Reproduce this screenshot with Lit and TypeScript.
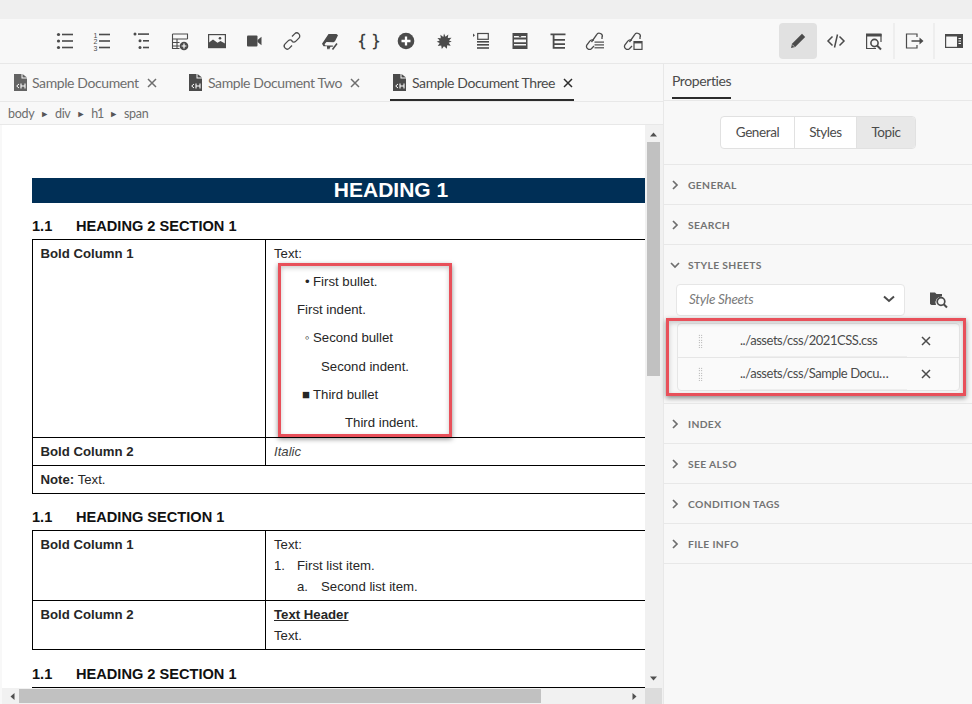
import { LitElement, html, css, svg } from "lit";
import { customElement } from "lit/decorators.js";

const i = (body: unknown, w = 20, h = 20) =>
  html`<svg width=${w} height=${h} viewBox="0 0 ${w} ${h}" fill="#4b4b4b">${body}</svg>`;

const lines = (x: number, x2: number, ys: number[], h = 1.6) =>
  ys.map((y) => svg`<rect x=${x} y=${y} width=${x2 - x} height=${h}></rect>`);

const link = svg`<g fill="none" stroke="#4b4b4b" stroke-width="1.3"><path d="M10 5.5l2.6-2.6a3 3 0 0 1 4.3 4.2l-3 3a3 3 0 0 1-4.2 0"/><path d="M10 14.5l-2.6 2.6a3 3 0 0 1-4.3-4.2l3-3a3 3 0 0 1 4.2 0"/></g>`;
const shortLink = svg`<g fill="none" stroke="#4b4b4b" stroke-width="1.3"><path d="M6.500 11l5-7a3 3 0 0 1 5.500 2.500V8"/><path d="M9 15l-2.600 2.700a3 3 0 0 1-4.600-3.600l3-4a3 3 0 0 1 4-.6"/></g>`;

const toolIcons = [
  i(svg`<circle cx="3.5" cy="3.5" r="1.6"></circle><circle cx="3.5" cy="10" r="1.6"></circle><circle cx="3.5" cy="16.5" r="1.6"></circle>${lines(7, 18, [2.7, 9.2, 15.7])}`),
  i(svg`<text x="0.5" y="6.5" font-size="7" font-family="Liberation Sans">1</text><text x="0.5" y="13" font-size="7" font-family="Liberation Sans">2</text><text x="0.5" y="19.5" font-size="7" font-family="Liberation Sans">3</text>${lines(6, 17, [2.7, 9.2, 15.7])}`),
  i(svg`<circle cx="4" cy="3" r="1.5"></circle><circle cx="9" cy="9.7" r="1.5"></circle><circle cx="9" cy="16.5" r="1.5"></circle>${lines(7, 18, [2.3])}${lines(12, 18, [9, 15.7])}`),
  i(svg`<path d="M3.5 3h15v5M3.5 3v14.5h7M3.5 8h15M3.5 11.5h7M3.5 15h7M8 8v9.5" stroke-width="1.1" fill="none" stroke="#4b4b4b"></path><circle cx="15" cy="15" r="4.3"></circle><path d="M15 12.6v4.8M12.6 15h4.8" stroke="#fff" stroke-width="1.2"></path>`),
  i(svg`<rect x="1.6" y="3.6" width="16.8" height="13" fill="none" stroke="#4b4b4b" stroke-width="1.2"></rect><path d="M2 15v-3.5l4-3 4.500 3.200 3-1.700 4.500 2.500V16.500H2z"></path><circle cx="13" cy="7.200" r="1.300"></circle>`),
  i(svg`<rect x="3" y="4.500" width="10.500" height="11" rx="1"></rect><path d="M13.500 9l4-3.200v8.400l-4-3.200z"></path>`),
  i(link),
  i(svg`<path d="M8.500 3h8l1.500 1.300-3 6-1.500 1-7-.3-2 2.200 1 1.300h7l1 .5-1 .7h-2l-1.500 3-1-1.500-1 1.500v-3.500H3.500l-1.500-2.500z"></path><path d="M12.500 18.500l4.500-6" fill="none" stroke="#4b4b4b" stroke-width="1.500"></path>`),
  html`<span class="braces">{ }</span>`,
  i(svg`<circle cx="10" cy="10" r="8.300"></circle><path d="M10 5.500v9M5.500 10h9" stroke="#fff" stroke-width="2.300"></path>`),
  i(svg`<path d="M10 2.500l1.500 3.300 2.800-2.200-.5 3.500 3.700-.3-2.500 2.700 2.700 1-3 1.300 2 3-3.500-.6-.3 3.500-2.900-2.400-2.200 2.600-.6-3.500-3.400.7 1.900-3-3-1.400 3-1.100-2.300-2.700 3.400.4-.4-3.600 2.900 2.200z"></path>`),
  i(svg`<path d="M1 2.500l2 1.800-2 1.800z"></path><rect x="5.700" y="2.500" width="10.600" height="5.800" fill="none" stroke="#4b4b4b" stroke-width="1.200"></rect>${lines(5, 17, [10, 13, 16.200])}`),
  i(svg`<path d="M2.500 2h15v16h-15z"></path><path d="M4 5h4.500l1.500 1.500L11.500 5H16v1.500H4zM4 8.500h12v2.800H4zM4 13h12v1.500H4z" fill="#f8f8f8"></path>`),
  i(svg`<path d="M2.500 2.500h15v1.800h-11V8H17v1.700H6.500v2.500H17v1.700H6.500V16H17v1.700H4.700V4.300H2.500z"></path>`),
  i(svg`${shortLink}${lines(9.500, 19, [10.500, 13.300, 16.200], 1.200)}`),
  i(svg`${shortLink}<rect x="11" y="10.600" width="8" height="7.800" fill="#f8f8f8" stroke="#4b4b4b" stroke-width="1.200"></rect><path d="M11 10.600h8v1.800h-8z"></path>`),
];

const pencil = i(svg`<path d="M14 2.800l3.200 3.200L7.200 16 3 17l1-4.200z"></path><path d="M4.200 13.600l2.200 2.200" stroke="#e1e1e1" stroke-width=".8"></path>`);
const code = i(svg`<path d="M6.500 5.500L2 10l4.500 4.500M13.500 5.500L18 10l-4.500 4.500M11.500 3.500l-3 13" fill="none" stroke="#4b4b4b" stroke-width="1.500"></path>`);
const preview = i(svg`<path d="M2 2.500h15.500v3H2z"></path><path d="M2.600 3v14.500H12M17 3v8" fill="none" stroke="#4b4b4b" stroke-width="1.200"></path><circle cx="10.500" cy="12" r="3.600" fill="none" stroke="#4b4b4b" stroke-width="1.600"></circle><path d="M13 14.500l4 4" stroke="#4b4b4b" stroke-width="2"></path>`);
const exportIcon = i(svg`<path d="M13 6V3H2.500v14H13v-3" fill="none" stroke="#4b4b4b" stroke-width="1.200"></path><path d="M7.500 9.300h8V6.500l4 3.500-4 3.500v-2.700h-8z"></path>`);
const panelIcon = i(svg`<rect x="1.600" y="3.600" width="16.800" height="12.800" fill="none" stroke="#4b4b4b" stroke-width="1.200"></rect><path d="M1.600 3h17v2.500h-17zM13 4h5.500v13H13z"></path><path d="M14.500 7.500h2.500M14.500 10h2.500M14.500 12.500h2.500" stroke="#f8f8f8" stroke-width="1"></path>`);

const fileIcon = html`<svg class="file" width="13" height="17" viewBox="0 0 13 17"><path d="M0 0h7.500v4.500H13V17H0z" fill="#4b4b4b"></path><path d="M8.500 0L13 3.500H8.500z" fill="#4b4b4b"></path><path d="M5 10l-2.300 2L5 14" fill="none" stroke="#fff" stroke-width="1"></path><path d="M7 9.500V14.500M11 9.500V14.500M7 12h4" fill="none" stroke="#fff" stroke-width="1.100"></path></svg>`;

const closeIcon = html`<svg class="x" width="10" height="10" viewBox="0 0 10 10"><path d="M1 1l8 8M9 1l-8 8" stroke="currentColor" stroke-width="1.500" fill="none"></path></svg>`;
const chevR = html`<svg width="8" height="10" viewBox="0 0 8 10"><path d="M2 1l4 4-4 4" fill="none" stroke="#6e6e6e" stroke-width="1.700"></path></svg>`;
const chevD = html`<svg width="10" height="8" viewBox="0 0 10 8"><path d="M1 2l4 4 4-4" fill="none" stroke="#6e6e6e" stroke-width="1.700"></path></svg>`;
const chevSel = html`<svg width="12" height="8" viewBox="0 0 12 8"><path d="M1 1.500l5 4.500 5-4.500" fill="none" stroke="#4b4b4b" stroke-width="2"></path></svg>`;
const folder = html`<svg width="20" height="18" viewBox="0 0 20 18"><path d="M1 3V1.500h5L7.500 3H13v2.500a6 6 0 0 0-6 8.500H2.500L1 13z" fill="#4b4b4b"></path><circle cx="12" cy="10.500" r="3.800" fill="none" stroke="#4b4b4b" stroke-width="1.700"></circle><path d="M14.700 13.200l3.300 3.300" stroke="#4b4b4b" stroke-width="2"></path></svg>`;

const tri = (d: string) => html`<svg width="7" height="7" viewBox="0 0 7 7"><path d=${d} fill="#505050"></path></svg>`;

@customElement("app-root")
export class AppRoot extends LitElement {
  static styles = css`
    :host { display: block; position: relative; width: 972px; height: 704px; overflow: hidden; background: #f8f8f8; font-family: "Lato", sans-serif; color: #4b4b4b; }
    .strip { height: 19px; background: #efefef; }
    .toolbar { height: 44px; display: flex; align-items: center; padding-left: 46px; border-bottom: 1px solid #e8e8e8; box-sizing: content-box; background: #f8f8f8; }
    .tool { width: 37.9px; height: 36px; display: flex; align-items: center; justify-content: center; flex: none; }
    .braces { font: 15px "DejaVu Sans Mono", monospace; color: #333; letter-spacing: -2px; -webkit-text-stroke: .3px #333; }
    .right { margin-left: auto; display: flex; align-items: center; }
    .mode { width: 38px; height: 36px; display: flex; align-items: center; justify-content: center; border-radius: 4px; }
    .mode.on { background: #e1e1e1; }
    .mode.last { width: 37px; }
    .sep { width: 2px; height: 36px; background: #eeeeee; }
    .main { display: flex; height: 640px; }
    .left { width: 664px; flex: none; display: flex; flex-direction: column; border-right: 1px solid #e8e8e8; box-sizing: border-box; }
    .tabs { height: 37px; display: flex; border-bottom: 1px solid #e8e8e8; padding-left: 14px; flex: none; box-sizing: content-box; }
    .tab { display: flex; align-items: center; font-size: 14px; letter-spacing: -.4px; color: #6e6e6e; height: 37px; box-sizing: border-box; }
    .tab .file { margin-right: 5px; }
    .tab .x { margin-left: 8px; color: #6e6e6e; }
    .tab.t1 { width: 175px; }
    .tab.t1 .file { opacity: .85; }
    .tab.t2 { width: 201px; }
    .tab.t2 .file { margin-right: 6px; }
    .tab.t3 { color: #4b4b4b; border-bottom: 2px solid #2c2c2c; padding: 2px 1px 0 3px; }
    .tab.t3 .file { margin-right: 6px; }
    .tab.t3 .x { color: #2c2c2c; }
    .crumb { height: 22px; flex: none; border-bottom: 1px solid #e8e8e8; display: flex; align-items: center; gap: 6px; padding-left: 8px; font-size: 12.500px; letter-spacing: -.3px; color: #6e6e6e; }
    .crumb i { font-style: normal; font-size: 9px; color: #555; }
    .crumb .h { letter-spacing: -1px; }
    .docwrap { flex: 1; min-height: 0; display: grid; grid-template-columns: 643px 17px; grid-template-rows: 1fr 16px; margin-left: 2px; background: #f1f1f1; }
    .doc { background: #fff; overflow: hidden; padding: 53px 0 0 30px; font-family: "Liberation Sans", Arial, sans-serif; font-size: 13.200px; color: #262626; min-height: 0; }
    .doc > * { width: 718px; }
    h1 { margin: 0; height: 25px; line-height: 24px; background: #002f56; color: #fff; text-align: center; font-size: 21px; font-weight: bold; }
    h2 { margin: 0; height: 37px; display: flex; align-items: flex-end; padding-bottom: 4px; box-sizing: border-box; font-size: 14.600px; font-weight: bold; color: #111; line-height: 18px; }
    h2.tight { height: 36px; }
    h2 b { width: 44px; }
    table { border-collapse: collapse; table-layout: fixed; }
    td { border: 1px solid #000; padding: 3px 8px; vertical-align: top; line-height: 21px; }
    td.c1 { width: 216.500px; padding-left: 7.500px; font-weight: bold; }
    td.tall { padding-bottom: 0; }
    .li { height: 28.200px; line-height: 28.200px; position: relative; white-space: pre; }
    .list { margin-top: 4px; }
    .m { position: absolute; }
    .flat { height: 21px; line-height: 21px; white-space: nowrap; }
    .num { float: left; width: 23px; }
    .num.sub { width: 24px; margin-left: 23px; }
    em { color: #444; }
    .hd { font-weight: bold; text-decoration: underline; }
    .vs { display: flex; flex-direction: column; align-items: center; justify-content: space-between; padding: 6px 0 6px; background: #f1f1f1; position: relative; }
    .vs .thumb { position: absolute; left: 2px; right: 2px; top: 17px; height: 234px; background: #c1c1c1; }
    .hs { display: flex; align-items: center; justify-content: space-between; padding: 0 7px; background: #f1f1f1; position: relative; }
    .hs .thumb { position: absolute; left: 17px; width: 522px; top: 1px; bottom: 1px; background: #c1c1c1; }
    .corner { background: #dcdcdc; }
    .panel { flex: 1; display: flex; flex-direction: column; min-width: 0; }
    .ptabs { height: 36px; border-bottom: 1px solid #e8e8e8; flex: none; padding-left: 8px; display: flex; box-sizing: content-box; }
    .ptab { border-bottom: 2px solid #2c2c2c; font-size: 14px; letter-spacing: -.4px; color: #4b4b4b; box-sizing: content-box; line-height: 34px; height: 33px; }
    .seg-row { height: 64px; flex: none; display: flex; justify-content: center; padding-top: 15px; box-sizing: border-box; border-bottom: 1px solid #e8e8e8; }
    .seg { display: flex; height: 33px; box-sizing: border-box; border: 1px solid #e1e1e1; border-radius: 4px; background: #fff; overflow: hidden; }
    .seg span { display: flex; align-items: center; justify-content: center; box-sizing: content-box; padding-bottom: 1px; font-size: 13.500px; letter-spacing: -.4px; color: #4b4b4b; border-left: 1px solid #e1e1e1; }
    .seg span:first-child { border-left: 0; width: 73px; }
    .seg span:nth-child(2) { width: 61px; }
    .seg span:nth-child(3) { width: 58px; background: #e8e8e8; }
    .sec { height: 40px; flex: none; box-sizing: border-box; border-bottom: 1px solid #e8e8e8; display: flex; align-items: center; padding-left: 7px; gap: 9px; font-size: 10.300px; font-weight: 700; letter-spacing: .35px; color: #737373; }
    .sec svg { width: 8px; }
    .open { height: 159px; flex: none; box-sizing: border-box; border-bottom: 1px solid #e8e8e8; display: flex; flex-direction: column; }
    .open .sec { border-bottom: 0; flex: none; gap: 8px; }
    .open .sec svg { width: 10px; margin-left: -1px; }
    .picker { display: flex; align-items: center; margin: -1px 0 0 12px; gap: 24px; }
    .select { width: 229px; height: 32px; box-sizing: border-box; background: #fff; border: 1px solid #e6e6e6; border-radius: 4px; display: flex; align-items: center; justify-content: space-between; padding: 0 9px 2px 12px; font-style: italic; font-size: 13.500px; letter-spacing: -.25px; color: #7a7a7a; }
    .rows { margin: 7px 0 0 13px; width: 283px; border: 1px solid #e6e6e6; border-radius: 4px; background: #fafafa; box-sizing: border-box; }
    .row { height: 33px; display: flex; align-items: center; font-size: 13px; letter-spacing: -.45px; color: #4b4b4b; box-sizing: border-box; }
    .row + .row { border-top: 1px solid #e6e6e6; }
    .grip { width: 5px; height: 14px; margin: 0 37px 0 20px; background-image: radial-gradient(#888 0.6px, transparent 0.7px); background-size: 2.500px 2.500px; flex: none; }
    .path { width: 167px; white-space: nowrap; flex: none; border-bottom: 1px solid #eeeeee; height: 32px; line-height: 31px; box-sizing: border-box; margin-right: 14px; }
    .row .x { color: #4b4b4b; }
    .mark { position: absolute; box-sizing: border-box; border: 3px solid #e8505a; box-shadow: 0 2px 5px rgba(0,0,0,.45), inset 0 2px 5px rgba(0,0,0,.2); pointer-events: none; }
    .mark.a { left: 278px; top: 263px; width: 174px; height: 174px; }
    .mark.b { left: 666px; top: 318px; width: 300px; height: 78px; }
  `;

  private section(n: string) {
    return html`<div class="sec">${chevR}<span>${n}</span></div>`;
  }

  render() {
    return html`
      <div class="strip"></div>
      <div class="toolbar">
        ${toolIcons.map((t) => html`<div class="tool">${t}</div>`)}
        <div class="right">
          <div class="mode on">${pencil}</div>
          <div class="mode">${code}</div>
          <div class="mode">${preview}</div>
          <div class="sep"></div>
          <div class="mode">${exportIcon}</div>
          <div class="sep"></div>
          <div class="mode last">${panelIcon}</div>
        </div>
      </div>
      <div class="main">
        <div class="left">
          <div class="tabs">
            <div class="tab t1">${fileIcon}<span>Sample Document</span>${closeIcon}</div>
            <div class="tab t2">${fileIcon}<span>Sample Document Two</span>${closeIcon}</div>
            <div class="tab t3">${fileIcon}<span>Sample Document Three</span>${closeIcon}</div>
          </div>
          <div class="crumb"><span>body</span><i>►</i><span>div</span><i>►</i><span class="h">h1</span><i>►</i><span>span</span></div>
          <div class="docwrap">
            <div class="doc">
              <h1>HEADING 1</h1>
              <h2 class="tight"><b>1.1</b>HEADING 2 SECTION 1</h2>
              <table>
                <tr>
                  <td class="c1">Bold Column 1</td>
                  <td class="tall">Text:
                    <div class="list">
                      <div class="li"><span class="m" style="left:31px">•</span><span style="margin-left:39px">First bullet.</span></div>
                      <div class="li"><span style="margin-left:23px">First indent.</span></div>
                      <div class="li"><span class="m" style="left:31px">◦</span><span style="margin-left:39px">Second bullet</span></div>
                      <div class="li"><span style="margin-left:47px">Second indent.</span></div>
                      <div class="li"><span class="m" style="left:28px">■</span><span style="margin-left:39px">Third bullet</span></div>
                      <div class="li"><span style="margin-left:71px">Third indent.</span></div>
                    </div>
                  </td>
                </tr>
                <tr><td class="c1">Bold Column 2</td><td><em>Italic</em></td></tr>
                <tr><td colspan="2" style="padding-left:7.500px"><b>Note:</b> Text.</td></tr>
              </table>
              <h2 class="tight"><b>1.1</b>HEADING SECTION 1</h2>
              <table>
                <tr>
                  <td class="c1">Bold Column 1</td>
                  <td>
                    <div class="flat">Text:</div>
                    <div class="flat"><span class="num">1.</span>First list item.</div>
                    <div class="flat"><span class="num sub">a.</span>Second list item.</div>
                  </td>
                </tr>
                <tr>
                  <td class="c1">Bold Column 2</td>
                  <td><div class="hd">Text Header</div><div>Text.</div></td>
                </tr>
              </table>
              <h2><b>1.1</b>HEADING 2 SECTION 1</h2>
              <table><tr><td class="c1">&nbsp;</td><td>&nbsp;</td></tr></table>
            </div>
            <div class="vs">${tri("M0 5.500L3.500 1.500 7 5.500z")}<div class="thumb"></div>${tri("M0 1.500L3.500 5.500 7 1.500z")}</div>
            <div class="hs">${tri("M5.500 0L1.500 3.500 5.500 7z")}<div class="thumb"></div>${tri("M1.500 0L5.500 3.500 1.500 7z")}</div>
            <div class="corner"></div>
          </div>
        </div>
        <div class="panel">
          <div class="ptabs"><div class="ptab">Properties</div></div>
          <div class="seg-row"><div class="seg"><span>General</span><span>Styles</span><span>Topic</span></div></div>
          ${this.section("GENERAL")}
          ${this.section("SEARCH")}
          <div class="open">
            <div class="sec">${chevD}<span>STYLE SHEETS</span></div>
            <div class="picker">
              <div class="select"><span>Style Sheets</span>${chevSel}</div>
              ${folder}
            </div>
            <div class="rows">
              <div class="row"><span class="grip"></span><span class="path">../assets/css/2021CSS.css</span>${closeIcon}</div>
              <div class="row"><span class="grip"></span><span class="path">../assets/css/Sample Docu…</span>${closeIcon}</div>
            </div>
          </div>
          ${this.section("INDEX")}
          ${this.section("SEE ALSO")}
          ${this.section("CONDITION TAGS")}
          ${this.section("FILE INFO")}
        </div>
      </div>
      <div class="mark a"></div>
      <div class="mark b"></div>
    `;
  }
}
